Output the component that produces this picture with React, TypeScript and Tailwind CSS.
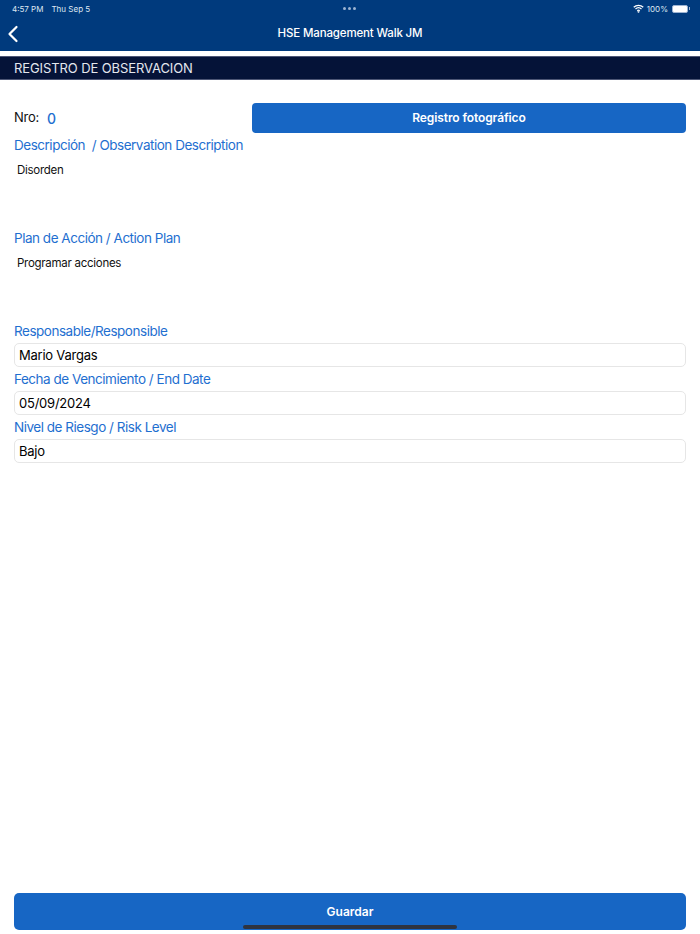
import { ChevronLeft } from "lucide-react";

function FieldLabel({ children }: { children: React.ReactNode }) {
  return <div className="h-[24px] text-[13.5px] leading-[24px] tracking-[-0.48px] text-[#1f6fd0] whitespace-pre">{children}</div>;
}

function TextArea({ value }: { value: string }) {
  return <div className="h-[69px] pl-[3px] pt-[4px] text-[11.5px] leading-[18px] tracking-[-0.28px] text-[#111]">{value}</div>;
}

function Input({ value }: { value: string }) {
  return (
    <div className="h-[24px] rounded-[5px] border border-[#e6e6e6] pl-[4px] text-[13px] leading-[22px] tracking-[-0.23px] text-black">
      {value}
    </div>
  );
}

export default function App() {
  return (
    <div className="relative flex h-[934px] w-[700px] flex-col overflow-hidden bg-white font-['Inter','Liberation_Sans',sans-serif]">
      {/* Header */}
      <div className="h-[51px] bg-[#003a7d] text-white">
        <div className="relative flex h-[17px] items-center justify-between pl-[12px] pr-[10px] text-[8px] text-[#dfe7f2]">
          <div className="flex gap-[8px]">
            <span>4:57 PM</span>
            <span>Thu Sep 5</span>
          </div>
          <div className="absolute left-[343px] top-[7px] flex gap-[2px]">
            <div className="h-[3px] w-[3px] rounded-full bg-[#9db4d3]" />
            <div className="h-[3px] w-[3px] rounded-full bg-[#9db4d3]" />
            <div className="h-[3px] w-[3px] rounded-full bg-[#9db4d3]" />
          </div>
          <div className="flex items-center gap-[3px]">
            <svg width="11" height="9" viewBox="0 0 22 16" fill="none" stroke="white" strokeWidth="2.6" strokeLinecap="butt">
              <path d="M1.5 5.5a14 14 0 0 1 19 0" />
              <path d="M5 9a9 9 0 0 1 12 0" />
              <path d="M8.5 12.4a4 4 0 0 1 5 0" />
              <circle cx="11" cy="14.4" r="0.6" fill="white" />
            </svg>
            <span>100%</span>
            <div className="ml-[1px] h-[8px] w-[16px] rounded-[2px] border border-[#9db4d3] bg-white" />
            <div className="ml-[-2px] h-[3px] w-[1px] bg-[#9db4d3]" />
          </div>
        </div>
        <div className="relative flex h-[33px] items-center justify-center text-[11.5px] font-medium tracking-[-0.15px]">
          <ChevronLeft className="absolute left-[-1px] top-[3px]" size={28} strokeWidth={1.9} />
          HSE Management Walk JM
        </div>
      </div>

      {/* Section title */}
      <div className="mt-[5px] h-[24px] border-y border-[#4d5675] bg-[#051338] pl-[14px] text-[13px] leading-[22px] tracking-[-0.1px] text-[#e4e7ee]">
        REGISTRO DE OBSERVACION
      </div>

      {/* Form */}
      <div className="flex flex-1 flex-col px-[14px] pt-[23px]">
        <div className="flex h-[30px] items-center justify-between">
          <div className="flex items-center gap-[8px]">
            <span className="text-[13px] tracking-[-0.25px] text-[#111]">Nro:</span>
            <span className="text-[14px] font-medium text-[#1f6fd0]">0</span>
          </div>
          <div className="flex h-[30px] w-[434px] items-center justify-center rounded-[4px] bg-[#1766c4] text-[12px] font-semibold tracking-[-0.1px] text-white">
            Registro fotográfico
          </div>
        </div>

        <div>
          <FieldLabel>Descripción  / Observation Description</FieldLabel>
          <TextArea value="Disorden" />
          <FieldLabel>Plan de Acción / Action Plan</FieldLabel>
          <TextArea value="Programar acciones" />
          <FieldLabel>Responsable/Responsible</FieldLabel>
          <Input value="Mario Vargas" />
          <FieldLabel>Fecha de Vencimiento / End Date</FieldLabel>
          <Input value="05/09/2024" />
          <FieldLabel>Nivel de Riesgo / Risk Level</FieldLabel>
          <Input value="Bajo" />
        </div>

        <div className="mb-[4px] mt-auto flex h-[37px] items-center justify-center rounded-[5px] bg-[#1766c4] text-[12px] font-semibold text-white">
          Guardar
        </div>
      </div>

      {/* Home indicator */}
      <div className="absolute bottom-[5px] left-[243px] h-[4px] w-[214px] rounded-full bg-[#2f3440]" />
    </div>
  );
}
